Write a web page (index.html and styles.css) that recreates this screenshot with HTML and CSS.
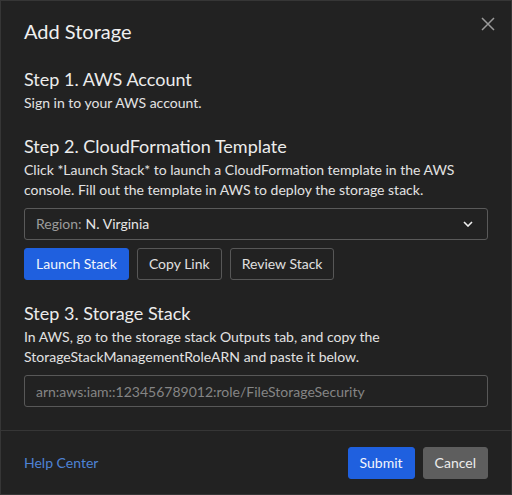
FILE: index.html
```html
<!DOCTYPE html>
<html lang="en">
<head>
<meta charset="utf-8">
<title>Add Storage</title>
<link rel="stylesheet" href="styles.css">
</head>
<body>
<div class="dialog" role="dialog" aria-labelledby="dialog-title">
  <header class="dialog-header">
    <h2 id="dialog-title" class="dialog-title">Add Storage</h2>
    <button class="close-btn" aria-label="Close">
      <svg width="14" height="14" viewBox="0 0 14 14" aria-hidden="true">
        <path d="M1 1 L13 13 M13 1 L1 13" stroke="currentColor" stroke-width="1.5" fill="none"/>
      </svg>
    </button>
  </header>

  <div class="dialog-body">
    <section class="step">
      <h3 class="step-title">Step 1. AWS Account</h3>
      <p class="step-text">Sign in to your AWS account.</p>
    </section>

    <section class="step">
      <h3 class="step-title">Step 2. CloudFormation Template</h3>
      <p class="step-text">Click *Launch Stack* to launch a CloudFormation template in the AWS console. Fill out the template in AWS to deploy the storage stack.</p>
      <div class="select">
        <span class="select-label">Region:</span>
        <span class="select-value">N. Virginia</span>
        <svg class="select-caret" width="10" height="6" viewBox="0 0 10 6" aria-hidden="true">
          <path d="M1 1 L5 5 L9 1" stroke="currentColor" stroke-width="1.6" fill="none"/>
        </svg>
      </div>
      <div class="btn-row">
        <button class="btn btn-primary">Launch Stack</button>
        <button class="btn btn-outline">Copy Link</button>
        <button class="btn btn-outline">Review Stack</button>
      </div>
    </section>

    <section class="step">
      <h3 class="step-title">Step 3. Storage Stack</h3>
      <p class="step-text">In AWS, go to the storage stack Outputs tab, and copy the StorageStackManagementRoleARN and paste it below.</p>
      <input class="text-input" type="text" placeholder="arn:aws:iam::123456789012:role/FileStorageSecurity">
    </section>
  </div>

  <footer class="dialog-footer">
    <a class="help-link" href="#">Help Center</a>
    <div class="footer-actions">
      <button class="btn btn-primary">Submit</button>
      <button class="btn btn-secondary">Cancel</button>
    </div>
  </footer>
</div>
</body>
</html>
```

FILE: styles.css
```css
* {
  box-sizing: border-box;
}

html, body {
  margin: 0;
  height: 100%;
  background: #222222;
}

body {
  font-family: Lato, "Noto Sans", sans-serif;
  color: #e6e6e6;
  font-size: 14px;
  line-height: 20px;
}

.dialog {
  height: 100vh;
  border: 1px solid #363636;
  background: #222222;
  display: flex;
  flex-direction: column;
}

.dialog-header {
  display: flex;
  justify-content: space-between;
  align-items: flex-start;
  padding: 15px 16px 0 23px;
}

.dialog-title {
  margin: 0;
  font-size: 20px;
  font-weight: 400;
  line-height: 30px;
  color: #f0f0f0;
}

.close-btn {
  margin-top: 1px;
  width: 14px;
  height: 14px;
  padding: 0;
  border: 0;
  background: none;
  color: #9a9a9a;
  display: flex;
  cursor: pointer;
}

.dialog-body {
  flex: 1;
  padding: 20px 23px 0;
  display: flex;
  flex-direction: column;
  gap: 20px;
}

.step {
  display: flex;
  flex-direction: column;
}

.step-title {
  margin: 0;
  font-size: 18px;
  font-weight: 400;
  line-height: 27px;
  color: #ececec;
}

.step-text {
  margin: 0;
  color: #e2e2e2;
}

.select {
  margin-top: 8px;
  height: 32px;
  border: 1px solid #5a5a5a;
  border-radius: 3px;
  display: flex;
  align-items: center;
  padding: 0 14px 0 11px;
  gap: 4px;
}

.select-label {
  color: #9c9c9c;
}

.select-value {
  flex: 1;
  color: #e6e6e6;
}

.select-caret {
  color: #f0f0f0;
}

.btn-row {
  margin-top: 8px;
  display: flex;
  gap: 8px;
}

.btn {
  font-family: inherit;
  font-size: 14px;
  line-height: 20px;
  height: 32px;
  padding: 0 11px;
  border-radius: 3px;
  border: 1px solid transparent;
  color: #eaeaea;
  cursor: pointer;
}

.btn-primary {
  background: #1f60df;
  border-color: #1f60df;
  color: #f4f6fb;
}

.btn-outline {
  background: transparent;
  border-color: #575757;
  color: #e0e0e0;
}

.btn-secondary {
  background: #5e5e5e;
  border-color: #5e5e5e;
  color: #ececec;
}

.text-input {
  margin-top: 8px;
  height: 32px;
  width: 100%;
  border: 1px solid #585858;
  border-radius: 3px;
  background: transparent;
  padding: 0 11px;
  font-family: inherit;
  font-size: 14px;
  color: #e6e6e6;
}

.text-input::placeholder {
  color: #858585;
}

.dialog-footer {
  border-top: 1px solid #363636;
  padding: 16px 23px 15px;
  display: flex;
  justify-content: space-between;
  align-items: center;
}

.help-link {
  color: #4f82d6;
  text-decoration: none;
}

.footer-actions {
  display: flex;
  gap: 8px;
}
```
